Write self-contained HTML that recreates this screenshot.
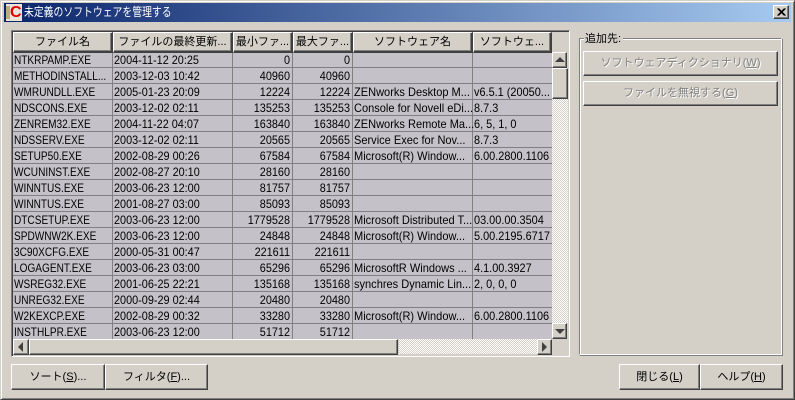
<!DOCTYPE html>
<html lang="ja"><head><meta charset="utf-8"><style>
html,body{margin:0;padding:0}
body{width:795px;height:400px;background:#d4d0c8;position:relative;overflow:hidden;font-family:"Liberation Sans","Noto Sans CJK JP",sans-serif;font-size:11px;color:#000}
div{position:absolute;box-sizing:border-box}
.t{white-space:nowrap;line-height:16px;height:16px;font-size:12px;transform-origin:0 50%}
.a{left:14px;transform:scaleX(.84)}
.b{left:114px;transform:scaleX(.905)}
.s{left:354px;transform:scaleX(.92)}
.v{left:474px;transform:scaleX(.91)}
.n{width:58px;text-align:right;transform:scaleX(.905);transform-origin:100% 50%}
.n1{left:232px}.n2{left:292px}
.btn{background:#d4d0c8;border:1px solid;border-color:#fff #404040 #404040 #fff;box-shadow:inset -1px -1px 0 #808080,inset 1px 1px 0 #d4d0c8;text-align:center;white-space:nowrap;font-size:11px}
.h{top:32px;height:21px;line-height:19px;border-width:1px 2px 2px 1px}
.bb{top:364px;height:26px;line-height:24px}
.dis{color:#808080;text-shadow:1px 1px 0 #fff;left:583px;width:195px;height:25px;line-height:22px}
.sb{width:15px;height:16px}
.tri{width:0;height:0;border-style:solid}
.hl{height:1px;left:13px;width:539px;background:#808080}
.vl{width:1px;top:53px;height:286px;background:#808080}
.pat{background-color:#fff;background-image:linear-gradient(45deg,#d4d0c8 25%,transparent 25%,transparent 75%,#d4d0c8 75%),linear-gradient(45deg,#d4d0c8 25%,transparent 25%,transparent 75%,#d4d0c8 75%);background-size:2px 2px;background-position:0 0,1px 1px}
u{text-decoration:underline}
</style></head><body>
<div style="left:0;top:0;width:795px;height:400px;border:1px solid;border-color:#d4d0c8 #404040 #404040 #d4d0c8;box-shadow:inset 1px 1px 0 #fff,inset -1px -1px 0 #808080"></div>
<div style="left:4px;top:3px;width:787px;height:19px;background:linear-gradient(90deg,#0a246a,#a6caf0)"></div>
<div style="left:6px;top:4px;width:16px;height:17px;background:#e8e4dc"></div>
<div style="left:6px;top:6px;width:4px;height:13px;background:#b9ad7d"></div>
<div class="t" style="left:10px;top:4px;width:12px;height:16px;color:#e00000;font:bold 16px/17px 'Liberation Sans',sans-serif">C</div>
<div class="t" style="left:24px;top:4px;color:#fff;font-size:12px;line-height:17px;transform:scaleX(.82)">未定義のソフトウェアを管理する</div>
<div class="btn" style="left:773px;top:5px;width:16px;height:14px"></div>
<svg style="position:absolute;left:773px;top:5px" width="16" height="14"><path d="M4.5 3.5L11.5 10.5M5.5 3.5L12.5 10.5M11.5 3.5L4.5 10.5M12.5 3.5L5.5 10.5" stroke="#000" stroke-width="1" fill="none"/></svg>

<!-- table frame -->
<div style="left:11px;top:30px;width:559px;height:327px;border:1px solid;border-color:#808080 #fff #fff #808080;box-shadow:inset 1px 1px 0 #404040"></div>
<div style="left:13px;top:53px;width:539px;height:286px;background:#c4c2c8"></div>
<div class="pat" style="left:552px;top:99px;width:16px;height:224px"></div>
<div class="pat" style="left:399px;top:339px;width:138px;height:15px"></div>

<div class="btn h" style="left:13px;width:100px">ファイル名</div>
<div class="btn h" style="left:113px;width:120px">ファイルの最終更新...</div>
<div class="btn h" style="left:233px;width:60px">最小ファ...</div>
<div class="btn h" style="left:293px;width:60px">最大ファ...</div>
<div class="btn h" style="left:353px;width:120px">ソフトウェア名</div>
<div class="btn h" style="left:473px;width:79px">ソフトウェ...</div>

<div class="hl" style="top:67px"></div><div class="hl" style="top:83px"></div><div class="hl" style="top:99px"></div><div class="hl" style="top:115px"></div><div class="hl" style="top:131px"></div><div class="hl" style="top:147px"></div><div class="hl" style="top:163px"></div><div class="hl" style="top:179px"></div><div class="hl" style="top:195px"></div><div class="hl" style="top:211px"></div><div class="hl" style="top:227px"></div><div class="hl" style="top:243px"></div><div class="hl" style="top:259px"></div><div class="hl" style="top:275px"></div><div class="hl" style="top:291px"></div><div class="hl" style="top:307px"></div><div class="hl" style="top:323px"></div>
<div class="vl" style="left:112px"></div><div class="vl" style="left:232px"></div><div class="vl" style="left:292px"></div><div class="vl" style="left:352px"></div><div class="vl" style="left:472px"></div>

<div class="t a" style="top:52px">NTKRPAMP.EXE</div><div class="t b" style="top:52px">2004-11-12 20:25</div><div class="t n n1" style="top:52px">0</div><div class="t n n2" style="top:52px">0</div>
<div class="t a" style="top:68px">METHODINSTALL...</div><div class="t b" style="top:68px">2003-12-03 10:42</div><div class="t n n1" style="top:68px">40960</div><div class="t n n2" style="top:68px">40960</div>
<div class="t a" style="top:84px">WMRUNDLL.EXE</div><div class="t b" style="top:84px">2005-01-23 20:09</div><div class="t n n1" style="top:84px">12224</div><div class="t n n2" style="top:84px">12224</div><div class="t s" style="top:84px">ZENworks Desktop M...</div><div class="t v" style="top:84px">v6.5.1 (20050...</div>
<div class="t a" style="top:100px">NDSCONS.EXE</div><div class="t b" style="top:100px">2003-12-02 02:11</div><div class="t n n1" style="top:100px">135253</div><div class="t n n2" style="top:100px">135253</div><div class="t s" style="top:100px">Console for Novell eDi...</div><div class="t v" style="top:100px">8.7.3</div>
<div class="t a" style="top:116px">ZENREM32.EXE</div><div class="t b" style="top:116px">2004-11-22 04:07</div><div class="t n n1" style="top:116px">163840</div><div class="t n n2" style="top:116px">163840</div><div class="t s" style="top:116px">ZENworks Remote Ma...</div><div class="t v" style="top:116px">6, 5, 1, 0</div>
<div class="t a" style="top:132px">NDSSERV.EXE</div><div class="t b" style="top:132px">2003-12-02 02:11</div><div class="t n n1" style="top:132px">20565</div><div class="t n n2" style="top:132px">20565</div><div class="t s" style="top:132px">Service Exec for Nov...</div><div class="t v" style="top:132px">8.7.3</div>
<div class="t a" style="top:148px">SETUP50.EXE</div><div class="t b" style="top:148px">2002-08-29 00:26</div><div class="t n n1" style="top:148px">67584</div><div class="t n n2" style="top:148px">67584</div><div class="t s" style="top:148px">Microsoft(R) Window...</div><div class="t v" style="top:148px">6.00.2800.1106</div>
<div class="t a" style="top:164px">WCUNINST.EXE</div><div class="t b" style="top:164px">2002-08-27 20:10</div><div class="t n n1" style="top:164px">28160</div><div class="t n n2" style="top:164px">28160</div>
<div class="t a" style="top:180px">WINNTUS.EXE</div><div class="t b" style="top:180px">2003-06-23 12:00</div><div class="t n n1" style="top:180px">81757</div><div class="t n n2" style="top:180px">81757</div>
<div class="t a" style="top:196px">WINNTUS.EXE</div><div class="t b" style="top:196px">2001-08-27 03:00</div><div class="t n n1" style="top:196px">85093</div><div class="t n n2" style="top:196px">85093</div>
<div class="t a" style="top:212px">DTCSETUP.EXE</div><div class="t b" style="top:212px">2003-06-23 12:00</div><div class="t n n1" style="top:212px">1779528</div><div class="t n n2" style="top:212px">1779528</div><div class="t s" style="top:212px">Microsoft Distributed T...</div><div class="t v" style="top:212px">03.00.00.3504</div>
<div class="t a" style="top:228px">SPDWNW2K.EXE</div><div class="t b" style="top:228px">2003-06-23 12:00</div><div class="t n n1" style="top:228px">24848</div><div class="t n n2" style="top:228px">24848</div><div class="t s" style="top:228px">Microsoft(R) Window...</div><div class="t v" style="top:228px">5.00.2195.6717</div>
<div class="t a" style="top:244px">3C90XCFG.EXE</div><div class="t b" style="top:244px">2000-05-31 00:47</div><div class="t n n1" style="top:244px">221611</div><div class="t n n2" style="top:244px">221611</div>
<div class="t a" style="top:260px">LOGAGENT.EXE</div><div class="t b" style="top:260px">2003-06-23 03:00</div><div class="t n n1" style="top:260px">65296</div><div class="t n n2" style="top:260px">65296</div><div class="t s" style="top:260px">MicrosoftR Windows ...</div><div class="t v" style="top:260px">4.1.00.3927</div>
<div class="t a" style="top:276px">WSREG32.EXE</div><div class="t b" style="top:276px">2001-06-25 22:21</div><div class="t n n1" style="top:276px">135168</div><div class="t n n2" style="top:276px">135168</div><div class="t s" style="top:276px">synchres Dynamic Lin...</div><div class="t v" style="top:276px">2, 0, 0, 0</div>
<div class="t a" style="top:292px">UNREG32.EXE</div><div class="t b" style="top:292px">2000-09-29 02:44</div><div class="t n n1" style="top:292px">20480</div><div class="t n n2" style="top:292px">20480</div>
<div class="t a" style="top:308px">W2KEXCP.EXE</div><div class="t b" style="top:308px">2002-08-29 00:32</div><div class="t n n1" style="top:308px">33280</div><div class="t n n2" style="top:308px">33280</div><div class="t s" style="top:308px">Microsoft(R) Window...</div><div class="t v" style="top:308px">6.00.2800.1106</div>
<div class="t a" style="top:324px">INSTHLPR.EXE</div><div class="t b" style="top:324px">2003-06-23 12:00</div><div class="t n n1" style="top:324px">51712</div><div class="t n n2" style="top:324px">51712</div>

<!-- scrollbars -->
<div class="btn sb" style="left:552px;top:52px"></div>
<div class="tri" style="left:555px;top:57px;border-width:0 5px 5px 5px;border-color:transparent transparent #404040 transparent"></div>
<div class="btn" style="left:552px;top:68px;width:16px;height:31px"></div>
<div class="btn sb" style="left:552px;top:323px"></div>
<div class="tri" style="left:555px;top:329px;border-width:5px 5px 0 5px;border-color:#404040 transparent transparent transparent"></div>
<div class="btn" style="left:13px;top:339px;width:16px;height:16px"></div>
<div class="tri" style="left:18px;top:342px;border-width:5px 5px 5px 0;border-color:transparent #404040 transparent transparent"></div>
<div class="btn" style="left:29px;top:339px;width:369px;height:16px"></div>
<div class="btn" style="left:537px;top:339px;width:15px;height:16px"></div>
<div class="tri" style="left:542px;top:342px;border-width:5px 0 5px 5px;border-color:transparent transparent transparent #404040"></div>

<!-- right panel -->
<div style="left:579px;top:38px;width:203px;height:317px;border:1px solid;border-color:#808080 #fff #fff #808080;box-shadow:inset 1px 1px 0 #fff,1px 1px 0 #808080"></div>
<div style="left:584px;top:31px;background:#d4d0c8;padding:0 2px 0 1px;height:15px;line-height:16px;white-space:nowrap;font-size:11px">追加先:</div>
<div class="btn dis" style="top:51px">ソフトウェアディクショナリ(<u>W</u>)</div>
<div class="btn dis" style="top:81px">ファイルを無視する(<u>G</u>)</div>

<!-- bottom buttons -->
<div class="btn bb" style="left:11px;width:94px">ソート(<u>S</u>)...</div>
<div class="btn bb" style="left:105px;width:103px">フィルタ(<u>F</u>)...</div>
<div class="btn bb" style="left:619px;width:81px">閉じる(<u>L</u>)</div>
<div class="btn bb" style="left:700px;width:83px">ヘルプ(<u>H</u>)</div>
</body></html>
